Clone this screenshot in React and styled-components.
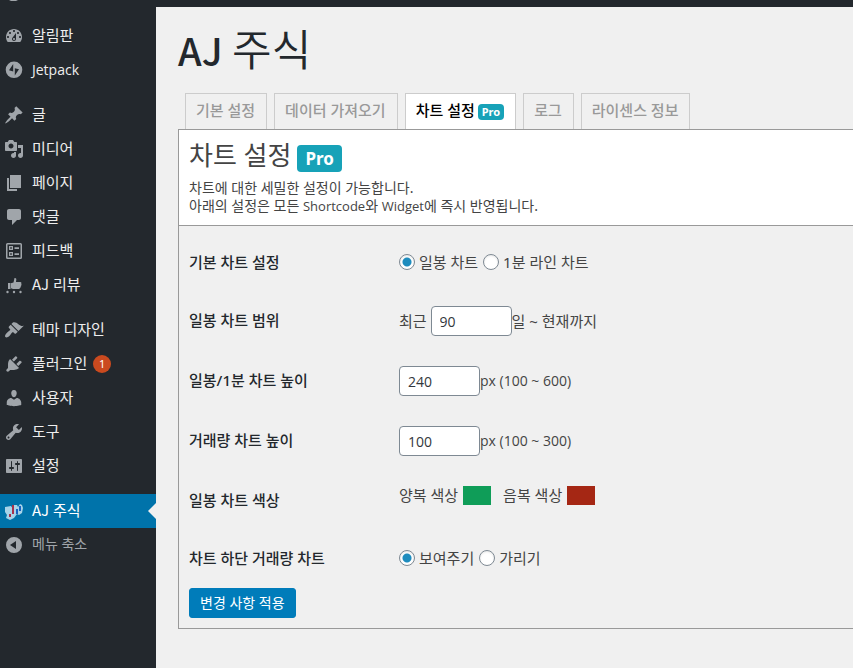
import React from 'react';
import styled, { createGlobalStyle, css } from 'styled-components';

const Global = createGlobalStyle`
  * { box-sizing: border-box; }
  body {
    margin: 0;
    background: #f0f0f0;
    color: #444;
    font-family: "Noto Sans", "Noto Sans CJK KR", sans-serif;
    font-size: 15px;
    line-height: 20px;
  }
  h1, h2, p, ul { margin: 0; padding: 0; }
  ul { list-style: none; }
`;

const TopBar = styled.header`
  height: 7px;
  padding-left: 8px;
  background: #23282d;
  overflow: hidden;
`;

const TopMark = styled.svg`
  display: block;
  width: 12px;
  height: 2px;
`;

const Shell = styled.div`
  display: flex;
  min-height: calc(100vh - 7px);
`;

const Sidebar = styled.nav`
  flex: 0 0 156px;
  padding-top: 12px;
  background: #23282d;
`;

const MenuGroup = styled.ul`
  margin-bottom: 11px;
`;

const rowStyles = css`
  display: flex;
  align-items: center;
  gap: 8px;
  width: 100%;
  height: 34px;
  padding: 0 0 0 4px;
  border: 0;
  font: inherit;
  text-decoration: none;
`;

const MenuLink = styled.a`
  ${rowStyles}
  position: relative;
  color: ${(p) => (p.$active ? '#fff' : '#eee')};
  background: ${(p) => (p.$active ? '#0073aa' : 'transparent')};
  ${(p) => p.$active && css`
    &::after {
      content: '';
      position: absolute;
      right: 0;
      top: 9px;
      border: 8px solid transparent;
      border-left: 0;
      border-right-color: #f0f0f0;
    }
  `}
`;

const CollapseButton = styled.button`
  ${rowStyles}
  color: #a0a5aa;
  background: transparent;
  font-size: 14px;
`;

const Icon = styled.svg`
  flex: none;
  width: 20px;
  height: 20px;
  fill: #a0a5aa;
`;

const MenuText = styled.span`
  display: flex;
  align-items: center;
  gap: 6px;
`;

const Raised = styled.span`
  padding-bottom: ${(p) => p.$by || 3}px;
`;

const Latin = styled.span`
  font-family: "Open Sans", "Noto Sans", sans-serif;
  font-size: ${(p) => p.$size || 14}px;
`;

const Initials = styled.span`
  font-family: "Noto Sans CJK KR", sans-serif;
  font-size: ${(p) => (p.$large ? '38px' : 'inherit')};
  font-weight: ${(p) => (p.$large ? 500 : 'inherit')};
`;

const Count = styled.span`
  width: 18px;
  height: 18px;
  border-radius: 9px;
  background: #ca4a1f;
  color: #fff;
  font-size: 11px;
  line-height: 18px;
  text-align: center;
`;

const Content = styled.main`
  flex: 1;
  min-width: 0;
  padding: 14px 0 40px 22px;
`;

const Title = styled.h1`
  color: #23282d;
  font-family: "Noto Sans CJK KR", sans-serif;
  font-size: 43px;
  font-weight: 350;
  line-height: 52px;
`;

const Tabs = styled.div`
  display: flex;
  gap: 7px;
  margin-top: 17px;
  padding-left: 7px;
  height: 36px;
`;

const Tab = styled.button`
  display: flex;
  align-items: center;
  gap: 3px;
  padding: 0 11px 0 10px;
  border: 1px solid #ccc;
  border-bottom: 0;
  background: ${(p) => (p.$active ? '#fff' : '#f0f0f0')};
  color: ${(p) => (p.$active ? '#000' : '#999')};
  font: inherit;
  font-weight: 500;
  white-space: nowrap;
`;

const Badge = styled.span`
  display: inline-block;
  padding: ${(p) => (p.$large ? '0 8px' : '0 4px')};
  border-radius: 4px;
  background: #17a2b8;
  color: #fff;
  font-size: ${(p) => (p.$large ? 17 : 11)}px;
  line-height: ${(p) => (p.$large ? 27 : 16)}px;
  font-weight: 700;
`;

const Panel = styled.section`
  border: 1px solid #999;
  border-right: 0;
`;

const PanelHead = styled.div`
  padding: 8px 10px 10px;
  border-bottom: 1px solid #999;
  background: #fff;
`;

const PanelTitle = styled.h2`
  display: flex;
  align-items: center;
  gap: 6px;
  height: 41px;
  font-size: 26px;
  font-weight: 400;
  line-height: 32px;
`;

const Description = styled.p`
  font-size: 14px;
  line-height: 18px;
`;

const Form = styled.form`
  padding: 6px 10px 10px;
`;

const Row = styled.div`
  display: flex;
  align-items: center;
  height: ${(p) => p.$height || 60}px;
`;

const RowLabel = styled.div`
  flex: 0 0 210px;
  padding-bottom: ${(p) => (p.$raised ? 3 : 0)}px;
  color: #23282d;
  font-weight: 500;
`;

const Field = styled.div`
  display: flex;
  align-items: center;
  gap: ${(p) => p.$gap || 0}px;
  padding-bottom: ${(p) => (p.$raised ? 9 : 0)}px;
`;

const Choice = styled.label`
  display: flex;
  align-items: center;
  gap: ${(p) => p.$gap || 4}px;
`;

const Radio = styled.input`
  appearance: none;
  width: 16px;
  height: 16px;
  margin: 0;
  border: 1px solid #7e8993;
  border-radius: 50%;
  background: #fff;
  box-shadow: inset 0 1px 2px rgba(0, 0, 0, 0.1);
  &:checked {
    background: radial-gradient(circle, #1e8cbe 0 4px, #fff 5px);
  }
`;

const NumberInput = styled.input`
  width: 81px;
  height: 30px;
  margin: 0;
  padding: 0 8px;
  border: 1px solid #7e8993;
  border-radius: 4px;
  background: #fff;
  color: #32373c;
  font: inherit;
  font-family: "Open Sans", "Noto Sans", sans-serif;
  font-size: 14px;
`;

const Swatch = styled.input`
  appearance: none;
  width: 28px;
  height: 19px;
  margin: 0;
  padding: 0;
  border: 0;
  background: none;
  &::-webkit-color-swatch-wrapper { padding: 0; }
  &::-webkit-color-swatch { border: 0; border-radius: 0; }
`;

const Submit = styled.button`
  display: block;
  height: 30px;
  padding: 0 10px;
  border: 1px solid #007cba;
  border-radius: 3px;
  background: #007cba;
  color: #fff;
  font: inherit;
  font-size: 14px;
  line-height: 26px;
`;

const icons = {
  dashboard: <path d="M3.76 16h12.48c1.1-1.37 1.76-3.11 1.76-5 0-4.42-3.58-8-8-8s-8 3.58-8 8c0 1.89.66 3.63 1.76 5zM10 4c.55 0 1 .45 1 1s-.45 1-1 1-1-.45-1-1 .45-1 1-1zM6 6c.55 0 1 .45 1 1s-.45 1-1 1-1-.45-1-1 .45-1 1-1zm8 0c.55 0 1 .45 1 1s-.45 1-1 1-1-.45-1-1 .45-1 1-1zm-5.37 5.55L12 7v6c0 1.1-.9 2-2 2s-2-.9-2-2c0-.57.24-1.08.63-1.45zM4 10c.55 0 1 .45 1 1s-.45 1-1 1-1-.45-1-1 .45-1 1-1zm12 0c.55 0 1 .45 1 1s-.45 1-1 1-1-.45-1-1 .45-1 1-1zm-5 3c0-.55-.45-1-1-1s-1 .45-1 1 .45 1 1 1 1-.45 1-1z" />,
  jetpack: <path fillRule="evenodd" d="M10 1.500a8.300 8.300 0 1 0 0 16.600 8.300 8.300 0 0 0 0-16.600zM9.200 4v7.400l-4.200-1.100zM10.800 15.600V8.200l4.200 1.100z" />,
  post: <path d="M10.44 3.02l1.82-1.82 6.36 6.35-1.83 1.82c-1.05-.68-2.48-.57-3.41.36l-.75.75c-.92.93-1.04 2.35-.35 3.41l-1.83 1.82-2.41-2.41-2.8 2.79c-.42.42-3.38 2.71-3.8 2.29s1.86-3.39 2.28-3.81l2.79-2.79L4.1 9.36l1.83-1.82c1.05.69 2.48.57 3.4-.36l.75-.75c.93-.92 1.05-2.35.36-3.41z" />,
  media: <path d="M13 11V4c0-.55-.45-1-1-1h-1.67L9 1H5L3.67 3H2c-.55 0-1 .45-1 1v7c0 .55.45 1 1 1h10c.55 0 1-.45 1-1zM7 4.5c1.38 0 2.5 1.12 2.5 2.5S8.38 9.5 7 9.5 4.5 8.38 4.5 7 5.62 4.5 7 4.5zM14 6h5v10.5c0 1.38-1.12 2.5-2.5 2.5S14 17.88 14 16.5s1.12-2.5 2.5-2.5c.17 0 .34.02.5.05V9h-3V6zm-4 8.05V13h2v3.5c0 1.38-1.12 2.5-2.5 2.5S7 17.88 7 16.5 8.12 14 9.5 14c.17 0 .34.02.5.05z" />,
  page: <path d="M6 15V2h11v13H6zm-1 1h8v2H3V5h2v11z" />,
  comments: <path d="M5 2h10c1.1 0 2 .9 2 2v7c0 1.1-.9 2-2 2h-2l-5 5v-5H5c-1.1 0-2-.9-2-2V4c0-1.1.9-2 2-2z" />,
  feedback: (
    <path fillRule="evenodd" d="M3.5 2h13A1.5 1.5 0 0 1 18 3.500v13a1.500 1.500 0 0 1-1.500 1.500h-13A1.500 1.500 0 0 1 2 16.500v-13A1.500 1.500 0 0 1 3.500 2zM3.500 3.500v13h13v-13zM5 5h4v4H5zM6.200 6.200v1.600h1.600V6.200zM10.500 6.300H15v1.600h-4.500zM5 11h4v4H5zM6.200 12.200v1.600h1.600v-1.600zM10.500 12.300H15v1.600h-4.500z" />
  ),
  review: (
    <>
      <path d="M4 8h2.500v6H4zM7 8.200l2.500-.7 1-4.500c1.300-.3 2 .5 1.800 1.600L12 7h4.400c.9 0 1.300.9.8 1.500.6.500.5 1.200-.1 1.600.4.600.2 1.200-.4 1.500.2.700-.2 1.300-.9 1.400 0 .6-.4 1-1.100 1H9l-2-.7z" />
      <circle cx="3.500" cy="17" r="1.200" /><circle cx="10" cy="17" r="1.200" /><circle cx="16.500" cy="17" r="1.200" />
    </>
  ),
  appearance: <path d="M14.48 11.06L7.41 3.99l1.5-1.5c.5-.56 2.3-.47 3.51.32 1.21.8 1.43 1.28 2.91 2.1 1.18.64 2.45 1.26 4.45.85zm-.71.71L6.7 4.7 4.93 6.47c-.39.39-.39 1.02 0 1.41l1.06 1.06c.39.39.39 1.03 0 1.42-.6.6-1.43 1.11-2.21 1.69-.35.26-.7.53-1.01.84C1.43 14.23.4 16.08 1.4 17.07c.99 1 2.84-.03 4.18-1.36.31-.31.58-.66.85-1.02.57-.78 1.08-1.61 1.69-2.21.39-.39 1.02-.39 1.41 0l1.06 1.06c.39.39 1.02.39 1.41 0z" />,
  plugins: <path d="M13.11 4.36L9.87 7.6 8 5.73l3.24-3.24c.35-.34 1.05-.2 1.56.32.52.51.66 1.21.31 1.55zm-8 1.77l.91-1.12 9.01 9.01-1.19.84c-.71.71-2.63 1.16-3.82 1.16H6.14L4.9 17.26c-.59.59-1.54.59-2.12 0-.59-.58-.59-1.53 0-2.12l1.24-1.24v-3.88c0-1.13.4-3.19 1.09-3.89zm7.26 3.97l3.24-3.24c.34-.35 1.04-.21 1.55.31.52.51.66 1.21.31 1.55l-3.24 3.25z" />,
  users: <path d="M10 9.25c-2.27 0-2.73-3.44-2.73-3.44C7 4.02 7.82 2 9.97 2c2.16 0 2.98 2.02 2.71 3.81 0 0-.41 3.44-2.68 3.44zm0 2.57L12.72 10c2.39 0 4.52 2.33 4.52 4.53v2.49s-3.65 1.13-7.24 1.13c-3.65 0-7.24-1.13-7.24-1.13v-2.49c0-2.25 1.94-4.48 4.47-4.48z" />,
  tools: <path d="M16.68 9.77c-1.34 1.34-3.3 1.67-4.95.99l-5.41 6.52c-.99.99-2.59.99-3.58 0s-.99-2.59 0-3.57l6.52-5.42c-.68-1.65-.35-3.61.99-4.95 1.28-1.28 3.12-1.62 4.72-1.06l-2.89 2.89 2.82 2.82 2.86-2.87c.53 1.58.18 3.39-1.08 4.65zM3.81 16.21c.4.39 1.04.39 1.43 0 .4-.4.4-1.04 0-1.43-.39-.4-1.03-.4-1.43 0-.39.39-.39 1.03 0 1.43z" />,
  settings: <path d="M18 16V4c0-.55-.45-1-1-1H3c-.55 0-1 .45-1 1v12c0 .55.45 1 1 1h14c.55 0 1-.45 1-1zM8 11h1c.55 0 1 .45 1 1s-.45 1-1 1H8v1.500c0 .28-.22.5-.5.5s-.5-.22-.5-.5V13H6c-.55 0-1-.45-1-1s.45-1 1-1h1V5.500c0-.28.22-.5.5-.5s.5.22.5.5V11zm5-2h-1c-.55 0-1-.45-1-1s.45-1 1-1h1V5.500c0-.28.22-.5.5-.5s.5.22.5.5V7h1c.55 0 1 .45 1 1s-.45 1-1 1h-1v5.500c0 .28-.22.5-.5.5s-.5-.22-.5-.5V9z" />,
  stock: (
    <>
      <path fill="#a7d3e8" d="M1 6l6-1 2 3 1-4 3 0 1 2 2-3 2 1 1 3-1 5-3 2-2-1-3 4-4 2-4-2 1-3-2-3z" />
      <path fill="#a8324c" d="M8 4h2v9H8zM5 13h2v3H5z" />
      <path fill="#1763c4" d="M12 8h2v5h-2zM15 5h2v5h-2z" />
    </>
  ),
  collapse: <path fillRule="evenodd" d="M10 2a8 8 0 1 0 0 16 8 8 0 0 0 0-16zM12 6v8l-6-4z" />,
};

const groups = [
  [
    { icon: 'dashboard', text: '알림판' },
    { icon: 'jetpack', latin: 'Jetpack' },
  ],
  [
    { icon: 'post', text: '글' },
    { icon: 'media', text: '미디어' },
    { icon: 'page', text: '페이지' },
    { icon: 'comments', text: '댓글' },
    { icon: 'feedback', text: '피드백' },
    { icon: 'review', initials: 'AJ', text: ' 리뷰' },
  ],
  [
    { icon: 'appearance', text: '테마 디자인' },
    { icon: 'plugins', text: '플러그인', count: 1 },
    { icon: 'users', text: '사용자' },
    { icon: 'tools', text: '도구' },
    { icon: 'settings', text: '설정' },
  ],
];

function MenuItem({ icon, latin, initials, text, count, active }) {
  return (
    <li>
      <MenuLink href="#" $active={active} aria-current={active ? 'page' : undefined}>
        <Icon viewBox="0 0 20 20" aria-hidden="true">{icons[icon]}</Icon>
        <MenuText>
          {latin
            ? <Latin>{latin}</Latin>
            : <Raised>{initials && <Initials>{initials}</Initials>}{text}</Raised>}
          {count && <Count>{count}</Count>}
        </MenuText>
      </MenuLink>
    </li>
  );
}

const tabs = ['기본 설정', '데이터 가져오기', '차트 설정', '로그', '라이센스 정보'];
const activeTab = '차트 설정';

export default function App() {
  return (
    <>
      <Global />
      <TopBar>
        <TopMark viewBox="0 0 12 2" aria-hidden="true"><path fill="#a0a5aa" d="M1 0h9L8 1H3z" /></TopMark>
      </TopBar>
      <Shell>
        <Sidebar>
          {groups.map((items) => (
            <MenuGroup key={items[0].icon}>
              {items.map((item) => <MenuItem key={item.icon} {...item} />)}
            </MenuGroup>
          ))}
          <ul>
            <MenuItem icon="stock" initials="AJ" text=" 주식" active />
          </ul>
          <CollapseButton type="button">
            <Icon viewBox="0 0 20 20" aria-hidden="true">{icons.collapse}</Icon>
            <Raised>메뉴 축소</Raised>
          </CollapseButton>
        </Sidebar>
        <Content>
          <Title><Initials $large>AJ</Initials> 주식</Title>
          <Tabs role="tablist">
            {tabs.map((tab) => (
              <Tab key={tab} type="button" role="tab" $active={tab === activeTab} aria-selected={tab === activeTab}>
                <Raised>{tab}</Raised>
                {tab === activeTab && <Badge>Pro</Badge>}
              </Tab>
            ))}
          </Tabs>
          <Panel>
            <PanelHead>
              <PanelTitle><Raised $by={8}>차트 설정</Raised> <Badge $large>Pro</Badge></PanelTitle>
              <Description>
                차트에 대한 세밀한 설정이 가능합니다.<br />
                아래의 설정은 모든 <Latin $size={13}>Shortcode</Latin>와 <Latin $size={13}>Widget</Latin>에 즉시 반영됩니다.
              </Description>
            </PanelHead>
            <Form onSubmit={(e) => e.preventDefault()}>
              <Row $height={59} role="radiogroup" aria-labelledby="default-chart">
                <RowLabel id="default-chart">기본 차트 설정</RowLabel>
                <Field $gap={5}>
                  <Choice><Radio type="radio" name="chart" defaultChecked />일봉 차트</Choice>
                  <Choice><Radio type="radio" name="chart" />1분 라인 차트</Choice>
                </Field>
              </Row>
              <Row>
                <RowLabel as="label" $raised htmlFor="range">일봉 차트 범위</RowLabel>
                <Field><Field $gap={4}>최근 <NumberInput id="range" defaultValue="90" /></Field>일 ~ 현재까지</Field>
              </Row>
              <Row>
                <RowLabel as="label" $raised htmlFor="height">일봉/1분 차트 높이</RowLabel>
                <Field><NumberInput id="height" defaultValue="240" /><Latin>px (100 ~ 600)</Latin></Field>
              </Row>
              <Row>
                <RowLabel as="label" $raised htmlFor="volume">거래량 차트 높이</RowLabel>
                <Field><NumberInput id="volume" defaultValue="100" /><Latin>px (100 ~ 300)</Latin></Field>
              </Row>
              <Row $height={57}>
                <RowLabel>일봉 차트 색상</RowLabel>
                <Field $gap={12} $raised>
                  <Choice $gap={5}>양복 색상<Swatch type="color" defaultValue="#0f9d58" /></Choice>
                  <Choice $gap={5}>음복 색상<Swatch type="color" defaultValue="#a52714" /></Choice>
                </Field>
              </Row>
              <Row role="radiogroup" aria-labelledby="volume-chart">
                <RowLabel id="volume-chart">차트 하단 거래량 차트</RowLabel>
                <Field $gap={5}>
                  <Choice><Radio type="radio" name="visible" defaultChecked />보여주기</Choice>
                  <Choice><Radio type="radio" name="visible" />가리기</Choice>
                </Field>
              </Row>
              <Submit type="submit">변경 사항 적용</Submit>
            </Form>
          </Panel>
        </Content>
      </Shell>
    </>
  );
}
